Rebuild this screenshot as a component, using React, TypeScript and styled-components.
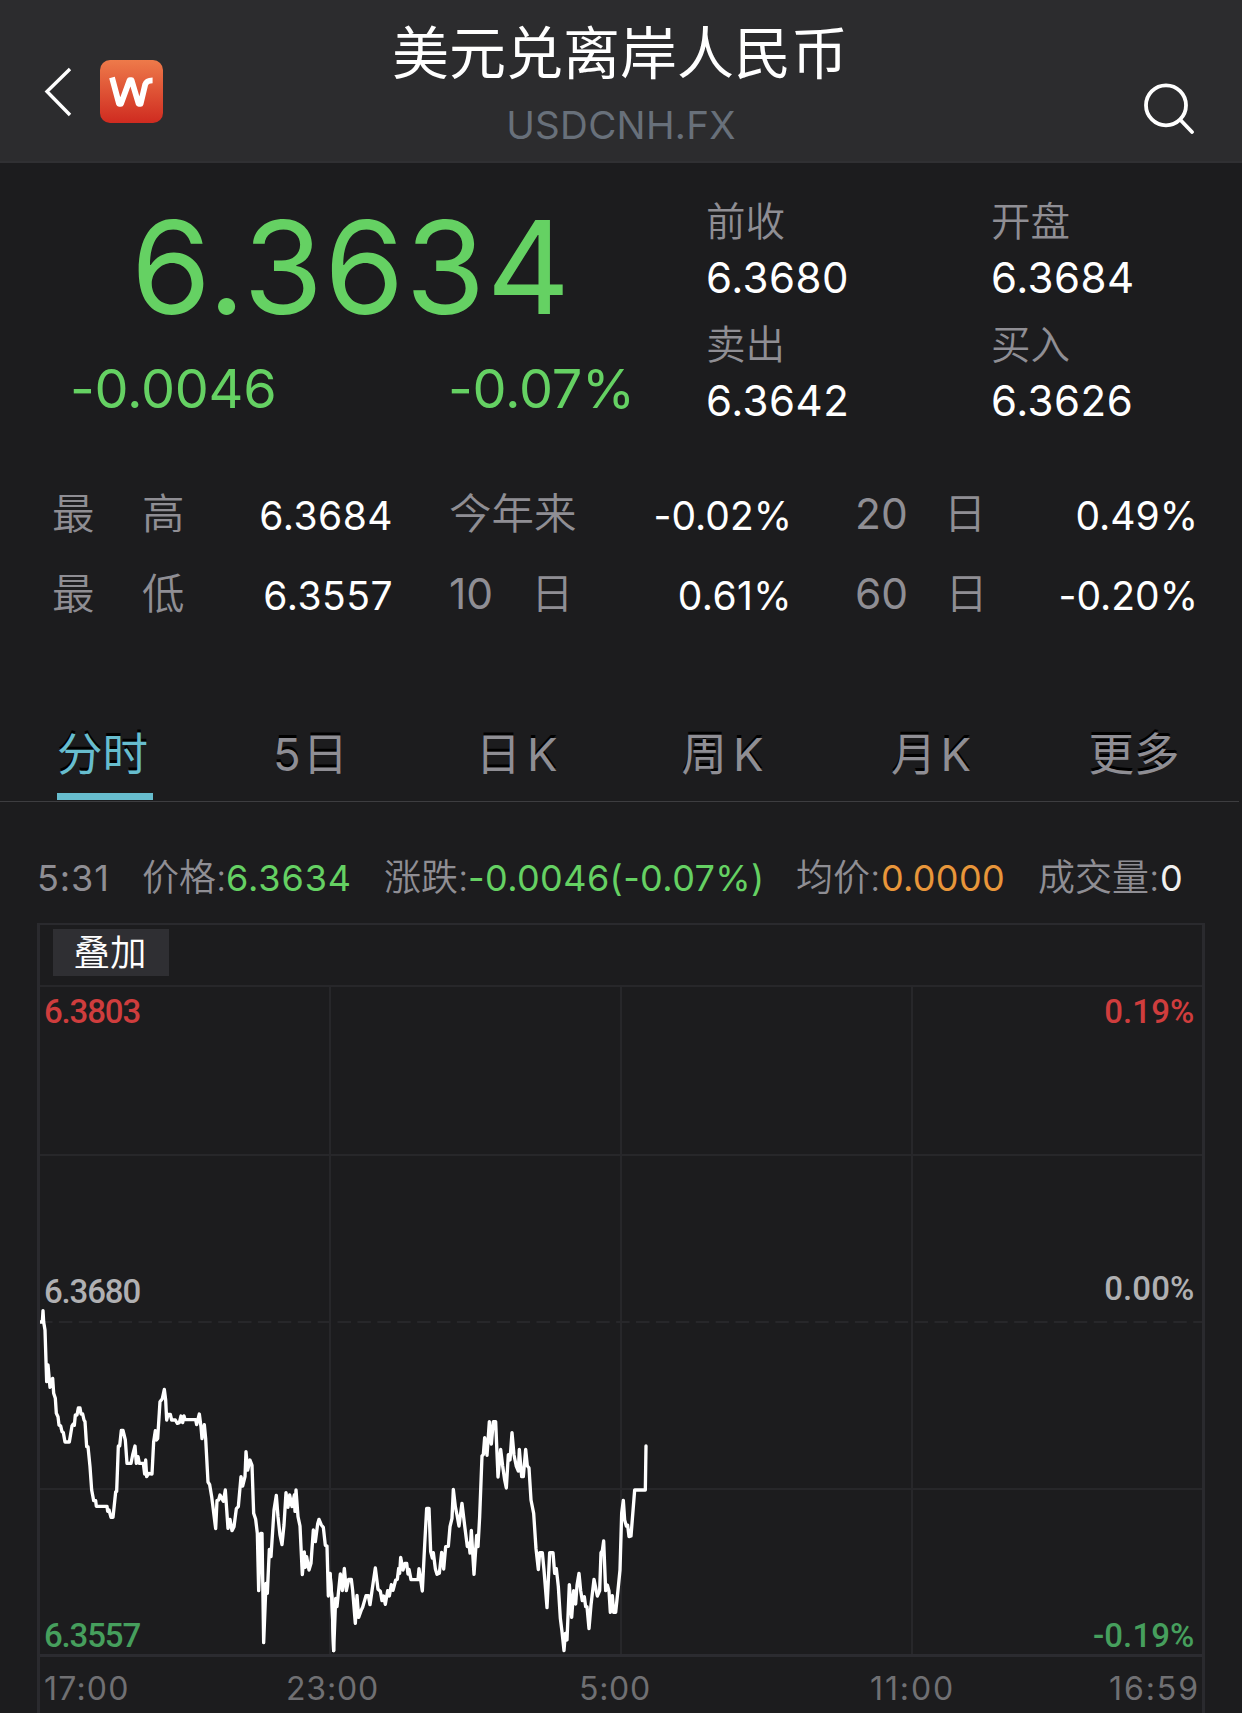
import React from "react";
import styled, { createGlobalStyle } from "styled-components";

const GlobalStyle = createGlobalStyle`
  html, body { margin: 0; padding: 0; background: #1c1c1e; }
  * { box-sizing: border-box; }
`;

const GREEN = "#65d163";
const GREY = "#8f8e94";

const Screen = styled.div`
  width: 1242px;
  height: 1713px;
  overflow: hidden;
  background: #1c1c1e;
  color: #fff;
  font-family: Inter, "Noto Sans CJK SC", sans-serif;
  font-feature-settings: "calt" 0;
`;

const Header = styled.header`
  display: grid;
  grid-template-columns: 240px 1fr 240px;
  height: 163px;
  background: #2c2c2e;
  border-bottom: 2px solid #303033;
`;

const HeaderLeft = styled.div`
  display: flex;
  align-items: flex-start;
  gap: 27px;
  padding: 60px 0 0 43px;
`;

const HeaderRight = styled.div`
  display: flex;
  justify-content: flex-end;
  padding: 82px 46px 0 0;
`;

const Titles = styled.div`
  display: flex;
  flex-direction: column;
  align-items: center;
  padding-top: 24px;
`;

const Title = styled.h1`
  margin: 0 2px 0 0;
  font-size: 57px;
  font-weight: 400;
  line-height: 60px;
  white-space: nowrap;
`;

const Code = styled.div`
  margin-top: 16px;
  font-size: 38.5px;
  font-weight: 400;
  line-height: 50px;
  letter-spacing: 0.3px;
  color: #68707a;
`;

const Quote = styled.section`
  display: grid;
  grid-template-columns: 706px 285px 1fr;
  height: 301px;
`;

const PriceBlock = styled.div`
  display: flex;
  flex-direction: column;
  padding-top: 29px;
  color: ${GREEN};
`;

const Price = styled.div`
  padding-left: 131px;
  font-size: 129px;
  line-height: 150px;
  letter-spacing: 1.4px;
`;

const Changes = styled.div`
  display: grid;
  grid-template-columns: 378px 1fr;
  margin-top: 17px;
  padding-left: 70px;
  font-size: 54px;
  line-height: 60px;
  letter-spacing: -0.25px;
`;

const QuoteColumn = styled.div`
  padding-top: 34px;
`;

const QuoteItem = styled.div`
  height: 122.5px;
`;

const QuoteLabel = styled.div`
  font-size: 39.5px;
  font-weight: 350;
  line-height: 50px;
  color: ${GREY};
`;

const QuoteValue = styled.div`
  margin-top: 6px;
  font-size: 42px;
  line-height: 50px;
  letter-spacing: 0.5px;
`;

const Stats = styled.section`
  display: grid;
  grid-template-columns: 341px 350px 343px;
  column-gap: 56px;
  grid-auto-rows: 79.5px;
  height: 238px;
  padding: 12px 0 0 52px;
`;

const Stat = styled.div<{ $inset?: number }>`
  display: flex;
  justify-content: space-between;
  padding-right: ${(p) => p.$inset ?? 0}px;
  line-height: 80px;
`;

const StatLabel = styled.span<{ $gap: number }>`
  display: flex;
  gap: ${(p) => p.$gap}px;
  margin-top: -2px;
  font-size: 42.5px;
  color: ${GREY};
`;

const StatPart = styled.span<{ $numeric: boolean }>`
  font-weight: ${(p) => (p.$numeric ? 400 : 350)};
`;

const StatValue = styled.span<{ $spacing: number }>`
  font-size: 39px;
  letter-spacing: ${(p) => p.$spacing}px;
`;

const Tabs = styled.nav`
  display: grid;
  grid-template-columns: 209px 203px 209px 203px 214px 192px;
  width: 1239px;
  height: 100px;
  border-bottom: 1px solid #3d3d40;
`;

const Tab = styled.div<{ $active?: boolean }>`
  display: flex;
  flex-direction: column;
  align-items: center;
  justify-content: flex-end;
  font-size: 45.5px;
  font-weight: 400;
  line-height: 60px;
  color: ${(p) => (p.$active ? "#67bdce" : GREY)};
  text-shadow: 0 -3px 0 #000;
`;

const TabText = styled.span<{ $gap: number; $active?: boolean }>`
  display: flex;
  gap: ${(p) => p.$gap}px;
  padding-right: ${(p) => (p.$active ? 4 : 0)}px;
`;

const Underline = styled.i<{ $active?: boolean }>`
  width: 96px;
  height: 7px;
  margin: 8px 0 1px;
  background: ${(p) => (p.$active ? "#67bdce" : "transparent")};
`;

const Ticker = styled.div`
  display: flex;
  height: 121px;
  padding: 46px 0 0 37px;
  font-size: 36px;
  line-height: 60px;
  color: ${GREY};
  white-space: nowrap;
`;

const TickerItem = styled.div<{ $width: number }>`
  display: flex;
  width: ${(p) => p.$width}px;
`;

const TickerTime = styled.span`
  width: 105px;
  letter-spacing: 0.9px;
`;

const TickerLabel = styled.span<{ $width: number }>`
  width: ${(p) => p.$width}px;
  font-size: 37px;
  font-weight: 350;
`;

const TickerValue = styled.span<{ $color: string; $spacing: number }>`
  letter-spacing: ${(p) => p.$spacing}px;
  color: ${(p) => p.$color};
`;

const Chart = styled.section`
  width: 1168px;
  height: 790px;
  margin-left: 37px;
  border: solid #2a2a2e;
  border-width: 2px 3px 0;
`;

const Toolbar = styled.div`
  height: 60px;
  padding: 4px 0 0 13px;
`;

const OverlayButton = styled.button`
  display: block;
  width: 116px;
  height: 47px;
  padding: 0 2px 0 0;
  border: 0;
  background: #2f2f33;
  color: #fff;
  font: 350 36.5px/48px Inter, "Noto Sans CJK SC", sans-serif;
`;

const Plot = styled.div`
  position: relative;
  height: 672px;
`;

const PlotSvg = styled.svg`
  display: block;
`;

const AxisLabel = styled.span<{ $top: number; $side: "left" | "right"; $color: string }>`
  position: absolute;
  top: ${(p) => p.$top}px;
  ${(p) => (p.$side === "left" ? "left: 4px;" : "right: 7.5px;")}
  font-family: Roboto, sans-serif;
  font-size: 33px;
  font-weight: 500;
  line-height: 40px;
  letter-spacing: ${(p) => (p.$side === "left" ? -1.15 : 0.1)}px;
  color: ${(p) => p.$color};
`;

const TimeAxis = styled.div`
  display: grid;
  grid-template-columns: 242px 293px 291px 239px 1fr;
  padding-left: 4px;
  font-size: 32px;
  font-weight: 400;
  line-height: 63px;
  color: #707073;
`;

const TimeLabel = styled.span<{ $spacing: number }>`
  letter-spacing: ${(p) => p.$spacing}px;
`;

const OPENING = `60,126 67,126 69,92 71,126 75,150 80,305 84,255 90,322 98,295 101,340 106,355 109,400
  114,410 117,435 122,438 126,455 130,458 135,486 148,486 156,438 160,432 163,436 166,405 171,405 175,384
  180,384 183,402 188,402 192,420 195,425 200,500 204,500 210,560 215,630 221,662 227,662 229,679 261,679
  263,694 267,690 273,712 279,712 287,636 290,634 295,498 299,498 304,451 309,451 316,480 321,550 333,550
  338,525 345,498 349,550 354,530 358,550 370,550 374,582 377,540 380,590 386,580 396,582 401,485 406,452
  409,480 413,476 420,365 427,356 433,328 437,360 440,420 444,403 451,403 455,420 466,420 472,430 478,428
  483,408 488,428 492,408 495,419 527,419 530,434 538,402 543,440 546,476 553,434 557,476 564,606 569,614
  575,650 587,746 591,662 596,660 600,645 610,664 616,630 624,745 630,718 636,752 642,740 649,686 655,680
  663,590 668,618 675,590 678,515 683,570 690,540 696,556 701,700 707,718 712,760 716,932 722,760 726,760
  731,1088 738,910 742,940 748,808 753,830 762,690 769,646 774,710 780,765 786,794 792,735 798,638
  804,682 809,645 816,680 823,645 825,694 828,630 834,710 840,738 847,884 853,816 856,862 860,830 867,870
  873,850 880,750 886,785 893,732 897,718 904,735 910,742 916,796 921,798 925,948 930,880 936,956 941,1112`;
const OVERNIGHT = `0,580 6,660 11,812 17,655 21,680 31,582 37,632 43,565 49,632 56,598 64,598 68,632 76,730 81,646
  86,712 94,690 98,682 108,647 115,647 120,674 126,632 136,564 144,628 151,634 156,662 161,648 166,673
  173,632 178,648 184,614 189,631 197,600 202,598 206,565 209,580 212,532 219,570 225,550 230,550 234,582
  237,568 243,599 264,599 267,566 277,633 284,495 290,385 297,385 302,515 307,534 310,518 316,566 321,583
  328,580 335,517 341,567 347,500 355,499 360,440 366,415 370,328 376,380 381,405 387,438 396,370 404,437
  412,500 417,490 420,519 424,451 432,583 440,466 444,500 449,410 456,228 460,224 464,173 471,226 478,125
  484,192 490,125 497,125 504,291 512,208 518,258 524,300 529,324 535,224 540,240 546,158 552,225 559,259
  565,273 568,208 575,290 580,290 587,208 592,257 597,264 603,360 611,400 618,506 625,569 629,518 637,518
  642,570 651,683 659,518 669,518 674,580 679,566 685,620 691,715 696,755 702,812 706,760 711,780 718,614
  725,712 731,632 737,672 741,616 747,580 752,632 757,662 763,650 767,680 771,680 777,746 783,675 792,598
  798,628 802,648 809,632 813,518 817,512 821,483 827,632 832,615 837,633 841,697 847,647 851,697 857,697
  864,630 870,570 875,400 880,361 884,420 889,438 893,436 897,470 903,468 914,330 946,330 948,198`;

const quotes = [
  [
    ["前收", "6.3680"],
    ["卖出", "6.3642"],
  ],
  [
    ["开盘", "6.3684"],
    ["买入", "6.3626"],
  ],
];

const stats: { label: string[]; gap: number; value: string; spacing: number; inset?: number }[] = [
  { label: ["最", "高"], gap: 47.5, value: "6.3684", spacing: 0.5 },
  { label: ["今年来"], gap: 0, value: "-0.02%", spacing: 0, inset: 7 },
  { label: ["20", "日"], gap: 36, value: "0.49%", spacing: 0 },
  { label: ["最", "低"], gap: 47.5, value: "6.3557", spacing: 0.5 },
  { label: ["10", "日"], gap: 38, value: "0.61%", spacing: 0.4, inset: 7 },
  { label: ["60", "日"], gap: 37, value: "-0.20%", spacing: 0 },
];

const tabs: { parts: string[]; gap: number }[] = [
  { parts: ["分时"], gap: 0 },
  { parts: ["5", "日"], gap: 2 },
  { parts: ["日", "K"], gap: 6 },
  { parts: ["周", "K"], gap: 6 },
  { parts: ["月", "K"], gap: 4 },
  { parts: ["更多"], gap: 0 },
];

const ticker = [
  { label: "价格:", labelWidth: 84, value: "6.3634", spacing: 0.9, color: GREEN, width: 242 },
  { label: "涨跌:", labelWidth: 84, value: "-0.0046(-0.07%)", spacing: 0.4, color: GREEN, width: 412 },
  { label: "均价:", labelWidth: 85, value: "0.0000", spacing: 0.3, color: "#e8963a", width: 242 },
  { label: "成交量:", labelWidth: 122, value: "0", spacing: 0, color: "#f0f0f0", width: 150 },
];

const axisLabels: { text: string; top: number; side: "left" | "right"; color: string }[] = [
  { text: "6.3803", top: 7, side: "left", color: "#cf3d3d" },
  { text: "0.19%", top: 7, side: "right", color: "#cf3d3d" },
  { text: "6.3680", top: 287, side: "left", color: "#b0b0b2" },
  { text: "0.00%", top: 284, side: "right", color: "#b0b0b2" },
  { text: "6.3557", top: 631, side: "left", color: "#469f5d" },
  { text: "-0.19%", top: 631, side: "right", color: "#469f5d" },
];

const times = [
  { text: "17:00", spacing: 1.2 },
  { text: "23:00", spacing: 0.8 },
  { text: "5:00", spacing: 0.7 },
  { text: "11:00", spacing: 1.9 },
  { text: "16:59", spacing: 1.9 },
];

export default function App() {
  return (
    <Screen>
      <GlobalStyle />
      <Header>
        <HeaderLeft>
          <svg width="30" height="63" viewBox="0 0 30 63" fill="none">
            <path d="M27 9 L4 31.5 L27 55" stroke="#fff" strokeWidth="3.4" />
          </svg>
          <svg width="63" height="63" viewBox="0 0 63 63">
            <defs>
              <linearGradient id="logo" x1="0" y1="0" x2="0" y2="1">
                <stop offset="0" stopColor="#ee7a4a" />
                <stop offset="1" stopColor="#cf2b20" />
              </linearGradient>
            </defs>
            <rect width="63" height="63" rx="10" fill="url(#logo)" />
            <path
              d="M12 17.4 L19 43.8 H21 L29.6 20.2 H31.6 L38.6 43.8 H40.6 L45.2 24.5 Q46.6 20.3 52.6 20.3"
              fill="none"
              stroke="#fff"
              strokeWidth="5.8"
              strokeLinejoin="round"
            />
          </svg>
        </HeaderLeft>
        <Titles>
          <Title>美元兑离岸人民币</Title>
          <Code>USDCNH.FX</Code>
        </Titles>
        <HeaderRight>
          <svg width="52" height="52" viewBox="0 0 52 52" fill="none" stroke="#fff" strokeWidth="3.8">
            <circle cx="22" cy="23.3" r="20" />
            <path d="M36.5 38 L48 50" strokeLinecap="round" />
          </svg>
        </HeaderRight>
      </Header>

      <Quote>
        <PriceBlock>
          <Price>6.3634</Price>
          <Changes>
            <span>-0.0046</span>
            <span>-0.07%</span>
          </Changes>
        </PriceBlock>
        {quotes.map((column, i) => (
          <QuoteColumn key={i}>
            {column.map(([label, value]) => (
              <QuoteItem key={label}>
                <QuoteLabel>{label}</QuoteLabel>
                <QuoteValue>{value}</QuoteValue>
              </QuoteItem>
            ))}
          </QuoteColumn>
        ))}
      </Quote>

      <Stats>
        {stats.map((s) => (
          <Stat key={s.label.join("")} $inset={s.inset}>
            <StatLabel $gap={s.gap}>
              {s.label.map((part) => (
                <StatPart key={part} $numeric={/^\d+$/.test(part)}>
                  {part}
                </StatPart>
              ))}
            </StatLabel>
            <StatValue $spacing={s.spacing}>{s.value}</StatValue>
          </Stat>
        ))}
      </Stats>

      <Tabs>
        {tabs.map((tab, i) => (
          <Tab key={tab.parts.join("")} $active={i === 0}>
            <TabText $gap={tab.gap} $active={i === 0}>
              {tab.parts.map((part) => (
                <span key={part}>{part}</span>
              ))}
            </TabText>
            <Underline $active={i === 0} />
          </Tab>
        ))}
      </Tabs>

      <Ticker>
        <TickerTime>5:31</TickerTime>
        {ticker.map((t) => (
          <TickerItem key={t.label} $width={t.width}>
            <TickerLabel $width={t.labelWidth}>{t.label}</TickerLabel>
            <TickerValue $color={t.color} $spacing={t.spacing}>
              {t.value}
            </TickerValue>
          </TickerItem>
        ))}
      </Ticker>

      <Chart>
        <Toolbar>
          <OverlayButton>叠加</OverlayButton>
        </Toolbar>
        <Plot>
          <PlotSvg width="1162" height="672" viewBox="40 985 1162 672">
            <g stroke="#27272a" strokeWidth="2">
              <path d="M40 986 H1202 M40 1155 H1202 M40 1489 H1202" />
              <path d="M330 986 V1655 M621 986 V1655 M912 986 V1655" />
              <path d="M40 1322 H1202" strokeDasharray="13.5 6.4" strokeDashoffset="1" />
            </g>
            <path d="M40 1655.5 H1202" stroke="#2b2b30" strokeWidth="3" />
            <g fill="none" stroke="#fff" strokeWidth="10" strokeLinejoin="round" strokeLinecap="round">
              <polyline transform="translate(20 1280) scale(0.33333)" points={OPENING} />
              <polyline transform="translate(330 1380) scale(0.33333)" points={OVERNIGHT} />
            </g>
          </PlotSvg>
          {axisLabels.map((a) => (
            <AxisLabel key={a.text} $top={a.top} $side={a.side} $color={a.color}>
              {a.text}
            </AxisLabel>
          ))}
        </Plot>
        <TimeAxis>
          {times.map((t) => (
            <TimeLabel key={t.text} $spacing={t.spacing}>
              {t.text}
            </TimeLabel>
          ))}
        </TimeAxis>
      </Chart>
    </Screen>
  );
}
